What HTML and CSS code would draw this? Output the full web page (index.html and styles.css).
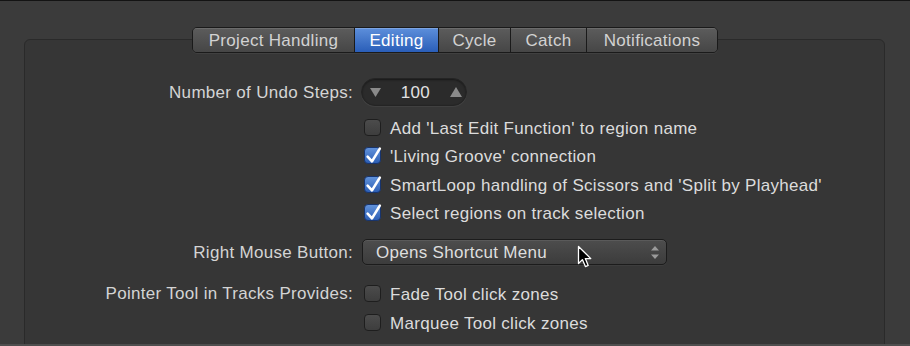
FILE: index.html
```html
<!DOCTYPE html>
<html>
<head>
<meta charset="utf-8">
<link rel="stylesheet" href="styles.css">
</head>
<body>
<div class="window">
  <div class="tabs">
    <div class="tabgroup">
      <div class="tab tab-project">Project Handling</div>
      <div class="tab tab-editing active">Editing</div>
      <div class="tab tab-cycle">Cycle</div>
      <div class="tab tab-catch">Catch</div>
      <div class="tab tab-notif">Notifications</div>
    </div>
  </div>
  <div class="panel">
    <div class="row row-stepper">
      <div class="label">Number of Undo Steps:</div>
      <div class="control">
        <div class="stepper">
          <svg class="tri" width="11" height="10" viewBox="0 0 11 10"><path d="M0 1 H11 L5.5 10 Z" fill="#8a8a8a"/></svg>
          <span class="stepper-value">100</span>
          <svg class="tri" width="12" height="10" viewBox="0 0 12 10"><path d="M0 10 H12 L6 0 Z" fill="#8a8a8a"/></svg>
        </div>
      </div>
    </div>

    <div class="row row-check first-check">
      <div class="label"></div>
      <div class="control">
        <div class="check">
          <svg class="box" width="17" height="17" viewBox="0 0 17 17"><defs><linearGradient id="gu1" x1="0" y1="0" x2="0" y2="1"><stop offset="0" stop-color="#4c4c4c"/><stop offset="1" stop-color="#3d3d3d"/></linearGradient></defs><rect x="0.5" y="0.5" width="16" height="16" rx="3.5" fill="url(#gu1)" stroke="#1e1e1e"/></svg>
          <span class="check-text">Add 'Last Edit Function' to region name</span>
        </div>
      </div>
    </div>
    <div class="row row-check">
      <div class="label"></div>
      <div class="control">
        <div class="check">
          <svg class="box" width="17" height="17" viewBox="0 0 17 17"><defs><linearGradient id="gc1" x1="0" y1="0" x2="0" y2="1"><stop offset="0" stop-color="#6394dc"/><stop offset="1" stop-color="#2b5db3"/></linearGradient></defs><rect x="0.5" y="0.5" width="16" height="16" rx="3.5" fill="url(#gc1)" stroke="#18346c"/><path d="M3.6 9.6 L8 14.4 L15.8 1.6" fill="none" stroke="#ffffff" stroke-width="2.6" stroke-linecap="round" stroke-linejoin="round"/></svg>
          <span class="check-text">'Living Groove' connection</span>
        </div>
      </div>
    </div>
    <div class="row row-check">
      <div class="label"></div>
      <div class="control">
        <div class="check">
          <svg class="box" width="17" height="17" viewBox="0 0 17 17"><defs><linearGradient id="gc2" x1="0" y1="0" x2="0" y2="1"><stop offset="0" stop-color="#6394dc"/><stop offset="1" stop-color="#2b5db3"/></linearGradient></defs><rect x="0.5" y="0.5" width="16" height="16" rx="3.5" fill="url(#gc2)" stroke="#18346c"/><path d="M3.6 9.6 L8 14.4 L15.8 1.6" fill="none" stroke="#ffffff" stroke-width="2.6" stroke-linecap="round" stroke-linejoin="round"/></svg>
          <span class="check-text">SmartLoop handling of Scissors and 'Split by Playhead'</span>
        </div>
      </div>
    </div>
    <div class="row row-check">
      <div class="label"></div>
      <div class="control">
        <div class="check">
          <svg class="box" width="17" height="17" viewBox="0 0 17 17"><defs><linearGradient id="gc3" x1="0" y1="0" x2="0" y2="1"><stop offset="0" stop-color="#6394dc"/><stop offset="1" stop-color="#2b5db3"/></linearGradient></defs><rect x="0.5" y="0.5" width="16" height="16" rx="3.5" fill="url(#gc3)" stroke="#18346c"/><path d="M3.6 9.6 L8 14.4 L15.8 1.6" fill="none" stroke="#ffffff" stroke-width="2.6" stroke-linecap="round" stroke-linejoin="round"/></svg>
          <span class="check-text">Select regions on track selection</span>
        </div>
      </div>
    </div>

    <div class="row row-popup">
      <div class="label">Right Mouse Button:</div>
      <div class="control">
        <div class="popup">
          <span class="popup-text">Opens Shortcut Menu</span>
          <svg class="popup-arrows" width="8" height="13" viewBox="0 0 8 13"><path d="M0 4.5 H8 L4 0 Z M0 8.5 H8 L4 13 Z" fill="#9a9a9a"/></svg>
        </div>
      </div>
    </div>

    <div class="row row-pointer first-pointer">
      <div class="label">Pointer Tool in Tracks Provides:</div>
      <div class="control">
        <div class="check">
          <svg class="box" width="17" height="17" viewBox="0 0 17 17"><defs><linearGradient id="gu2" x1="0" y1="0" x2="0" y2="1"><stop offset="0" stop-color="#4c4c4c"/><stop offset="1" stop-color="#3d3d3d"/></linearGradient></defs><rect x="0.5" y="0.5" width="16" height="16" rx="3.5" fill="url(#gu2)" stroke="#1e1e1e"/></svg>
          <span class="check-text">Fade Tool click zones</span>
        </div>
      </div>
    </div>
    <div class="row row-pointer">
      <div class="label"></div>
      <div class="control">
        <div class="check">
          <svg class="box" width="17" height="17" viewBox="0 0 17 17"><defs><linearGradient id="gu3" x1="0" y1="0" x2="0" y2="1"><stop offset="0" stop-color="#4c4c4c"/><stop offset="1" stop-color="#3d3d3d"/></linearGradient></defs><rect x="0.5" y="0.5" width="16" height="16" rx="3.5" fill="url(#gu3)" stroke="#1e1e1e"/></svg>
          <span class="check-text">Marquee Tool click zones</span>
        </div>
      </div>
    </div>
  </div>
</div>
<svg class="cursor" width="16" height="24" viewBox="0 0 16 24"><path d="M1.5 1.5 V18.5 L5.4 14.6 L8.4 21.6 L11.2 20.4 L8.3 13.6 H13.8 Z" fill="#000000" stroke="#ffffff" stroke-width="1.3" stroke-linejoin="round"/></svg>
</body>
</html>
```

FILE: styles.css
```css
html, body {
  margin: 0;
  padding: 0;
}

body {
  width: 910px;
  height: 346px;
  overflow: hidden;
  background: #3a3a3a;
  font-family: "Liberation Sans", Arial, Helvetica, sans-serif;
  font-size: 17px;
  letter-spacing: 0.3px;
  color: #d9d9d9;
  position: relative;
}

.window {
  height: 346px;
  box-sizing: border-box;
  border-top: 1px solid #131313;
  border-bottom: 2px solid #4e4e4e;
  padding-top: 26px;
  overflow: hidden;
  background: #3b3b3b;
}

.tabs {
  display: flex;
  justify-content: center;
  position: relative;
  z-index: 1;
}

.tabgroup {
  display: flex;
  border: 1px solid #1a1a1a;
  border-radius: 5px;
  overflow: hidden;
  box-shadow: 0 1px 0 rgba(255, 255, 255, 0.05);
}

.tab {
  box-sizing: border-box;
  height: 24px;
  padding-top: 1px;
  line-height: 24px;
  text-align: center;
  background: linear-gradient(#5c5c5c, #464646);
  color: #d2d2d2;
  border-left: 1px solid #1a1a1a;
  box-shadow: inset 0 1px 0 rgba(255, 255, 255, 0.1);
}

.tab-project { width: 161px; border-left: none; }
.tab-editing { width: 84px; }
.tab-cycle { width: 72px; }
.tab-catch { width: 76px; }
.tab-notif { width: 131px; }

.tab.active {
  background: linear-gradient(#5d8fdb, #2a5eb8);
  color: #ffffff;
  box-shadow: inset 0 1px 0 rgba(255, 255, 255, 0.2);
}

.panel {
  margin: -14px 25px 0 24px;
  height: 330px;
  box-sizing: border-box;
  background: #363636;
  border: 1px solid #2a2a2a;
  border-radius: 6px;
  padding-top: 38px;
  display: flex;
  flex-direction: column;
}

.row {
  display: grid;
  grid-template-columns: 328px 1fr;
  column-gap: 9px;
  align-items: center;
}

.label {
  text-align: right;
  color: #d4d4d4;
  white-space: nowrap;
  padding-top: 2px;
}

.control {
  display: flex;
  align-items: center;
}

.row-stepper { height: 28px; }
.row-check { height: 28.5px; }
.first-check { margin-top: 7px; }
.row-popup { height: 26px; margin-top: 12px; }
.row-pointer { height: 29px; }
.first-pointer { margin-top: 13.5px; }

.stepper {
  box-sizing: border-box;
  width: 106px;
  height: 28px;
  margin-left: -1px;
  border-radius: 14px;
  background: #2b2b2b;
  border: 1px solid #242424;
  box-shadow: inset 0 1px 2px rgba(0, 0, 0, 0.45), 0 1px 0 rgba(255, 255, 255, 0.05);
  display: flex;
  align-items: center;
  padding: 0 4px 0 8px;
}

.stepper-value {
  flex: 1;
  text-align: center;
  color: #e2e2e2;
  padding-top: 2px;
}

.tri { display: block; }

.check {
  display: flex;
  align-items: center;
  gap: 9px;
  margin-left: 2px;
  color: #dcdcdc;
  white-space: nowrap;
}

.check-text {
  padding-top: 3px;
}

.box {
  display: block;
  overflow: visible;
  flex: none;
}

.popup {
  box-sizing: border-box;
  width: 305px;
  height: 26px;
  border: 1px solid #1c1c1c;
  border-radius: 5px;
  background: linear-gradient(#4d4d4d, #3c3c3c);
  box-shadow: inset 0 1px 0 rgba(255, 255, 255, 0.08), 0 1px 0 rgba(255, 255, 255, 0.04);
  display: flex;
  align-items: center;
  justify-content: space-between;
  padding: 0 7px 0 13px;
  color: #dedede;
  white-space: nowrap;
}

.popup-text {
  padding-top: 2px;
}

.popup-arrows { display: block; }

.cursor {
  position: absolute;
  left: 576.5px;
  top: 244.5px;
  overflow: visible;
}
```
